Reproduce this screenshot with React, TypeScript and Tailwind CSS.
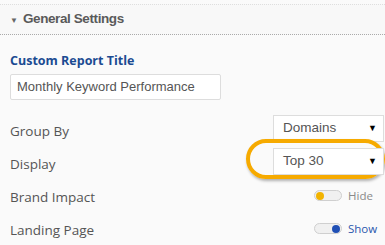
function Select({ value, highlight }: { value: string; highlight?: boolean }) {
  return (
    <div className="relative">
      {highlight && (
        <div className="absolute left-[-27px] top-[-9px] w-[139px] h-[40px] rounded-[20px] border-[4px] border-[#f6aa00] shadow-[1px_2px_3px_rgba(0,0,0,0.3)]" />
      )}
      <div className="relative w-[111px] h-[27px] bg-white border border-[#dddddd] flex items-center justify-between pl-[9px] pr-[6px] font-['Liberation_Sans',Arial,sans-serif] text-[13.5px] text-[#555]">
        <span>{value}</span>
        <span className="text-[9px] text-black">▼</span>
      </div>
    </div>
  );
}

function Toggle({ on }: { on?: boolean }) {
  return (
    <div className="flex items-center gap-[6px] pt-[2px]">
      <div
        className={`w-[28px] h-[11px] rounded-full border border-[#cfcfcf] bg-[#f0f0f0] flex items-center px-[1px] ${
          on ? "justify-end" : "justify-start"
        }`}
      >
        <div
          className={`w-[8px] h-[8px] rounded-full ${
            on ? "bg-[#1f4fb5]" : "bg-[#f2b300]"
          }`}
        />
      </div>
      <span
        className={`text-[11.5px] w-[36px] ${
          on ? "text-[#2a57ad]" : "text-[#8a8a8a]"
        }`}
      >
        {on ? "Show" : "Hide"}
      </span>
    </div>
  );
}

export default function App() {
  const rows = [
    { label: "Group By", control: <Select value="Domains" /> },
    { label: "Display", control: <Select value="Top 30" highlight /> },
    { label: "Brand Impact", control: <Toggle /> },
    { label: "Landing Page", control: <Toggle on /> },
  ];

  return (
    <div className="w-[385px] h-[245px] overflow-hidden bg-[#fafafa] pt-[4px] font-['Open_Sans',sans-serif]">
      {/* Header */}
      <div className="h-[31px] border-t border-[#dedede] border-b border-b-[#aaa] border-dotted flex items-center pl-[10px] bg-[#f8f8f8]">
        <span className="text-[8px] text-[#666] mr-[5px]">▼</span>
        <span className="font-['Liberation_Sans',Arial,sans-serif] font-bold text-[13.5px] tracking-[-0.4px] text-[#5a5a5a]">
          General Settings
        </span>
      </div>

      <div className="pl-[10px]">
        <h2 className="mt-[17px] text-[12.5px] font-bold text-[#1b4b92] leading-[18px]">
          Custom Report Title
        </h2>
        <div className="mt-[4px] w-[211px] h-[26px] bg-white border border-[#dddddd] rounded-[2px] flex items-center pl-[6px] font-['Liberation_Sans',Arial,sans-serif] text-[13px] text-[#555]">
          Monthly Keyword Performance
        </div>

        <div className="mt-[12px]">
          {rows.map((row, idx) => (
            <div key={idx} className="h-[33px] flex items-center justify-between pr-[1px]">
              <span className="text-[13.5px] text-[#555] pt-[5px]">{row.label}</span>
              {row.control}
            </div>
          ))}
        </div>
      </div>
    </div>
  );
}
